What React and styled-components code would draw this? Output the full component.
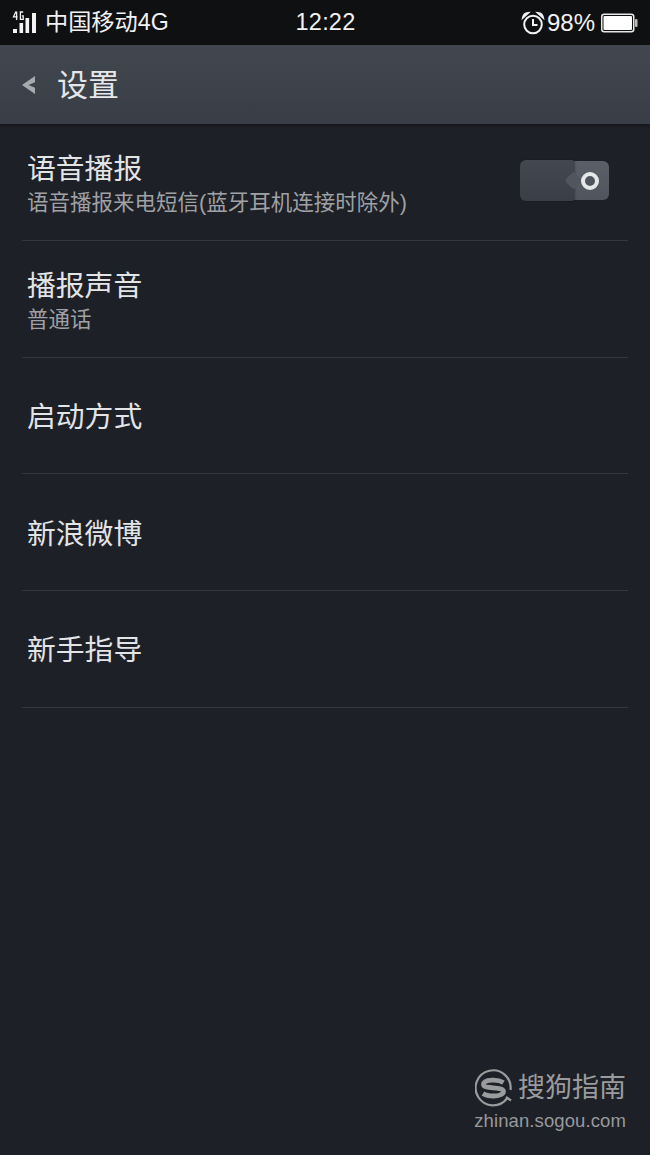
import React from "react";
import styled, { createGlobalStyle } from "styled-components";

const Global = createGlobalStyle`
  html, body { margin: 0; padding: 0; background: #1d2027; }
  body { font-family: "Liberation Sans", "Noto Sans CJK SC", sans-serif; }
`;

const Page = styled.div`
  position: relative;
  width: 650px;
  height: 1155px;
  overflow: hidden;
  background: #1d2027;
`;

const StatusBar = styled.div`
  height: 45px;
  background: #0f1011;
  color: #f2f2f2;
  display: grid;
  grid-template-columns: 1fr auto 1fr;
  align-items: center;
  padding: 0 12px;
  box-sizing: border-box;
`;

const StatusLeft = styled.div`
  display: flex;
  align-items: center;
  gap: 9px;
  font-size: 23.2px;
  line-height: 24px;
  padding-bottom: 3px;
`;

const SignalWrap = styled.span`
  display: flex;
  padding-top: 4px;
`;

const Carrier = styled.span`
  padding-top: 2px;
`;

const Clock = styled.div`
  font-size: 23.5px;
  letter-spacing: 0.2px;
  margin-left: 1px;
  padding-bottom: 1px;
`;

const StatusRight = styled.div`
  display: flex;
  align-items: center;
  justify-content: flex-end;
  gap: 2px;
  font-size: 24px;
`;

const Percent = styled.span`
  margin-right: 4px;
`;

const Header = styled.header`
  height: 79px;
  box-sizing: border-box;
  background: linear-gradient(#41474f, #383d46);
  box-shadow: 0 2px 2px rgba(20, 21, 25, 0.8);
  display: flex;
  align-items: center;
  padding: 1px 0 0 21px;
  gap: 21px;
`;

const HeaderTitle = styled.h1`
  margin: 0;
  padding-top: 2px;
  font-size: 31px;
  line-height: 40px;
  font-weight: 400;
  color: #e6e7e8;
`;

const List = styled.div`
  padding: 0 22px;
`;

const Row = styled.div`
  height: 116.75px;
  box-sizing: border-box;
  border-bottom: 1px solid #34373d;
  display: flex;
  align-items: center;
  justify-content: space-between;
  padding: 0 19px 0 5px;
`;

const RowText = styled.div`
  display: flex;
  flex-direction: column;
  padding-top: ${(props) => (props.$single ? "3px" : "6px")};
`;

const RowTitle = styled.div`
  font-size: 28.8px;
  line-height: 36px;
  color: #e3e4e5;
`;

const RowSub = styled.div`
  font-size: 21.5px;
  line-height: 31px;
  margin-top: 1px;
  color: #a0a1a4;
`;

const Switch = styled.div`
  display: flex;
  width: 89px;
  height: 41px;
  margin-bottom: 2px;
`;

const SwitchOff = styled.div`
  position: relative;
  width: 54px;
  background: linear-gradient(#43474f, #3a3e47);
  border-radius: 6px 2px 2px 6px;
  box-shadow: 1px 0 2px rgba(0, 0, 0, 0.3);
  z-index: 1;
`;

const SwitchOn = styled.div`
  position: relative;
  flex: 1;
  margin: 1px 0;
  background: linear-gradient(#5a5f68, #4f545d);
  border-radius: 0 6px 6px 0;
  display: flex;
  align-items: center;
  justify-content: center;
  padding-right: 4px;
  &::before {
    content: "";
    position: absolute;
    left: -7px;
    top: 13px;
    width: 13px;
    height: 13px;
    background: #50555e;
    transform: rotate(45deg);
    border-radius: 3px;
    z-index: 2;
  }
`;

const Ring = styled.div`
  width: 10px;
  height: 10px;
  border: 4px solid #e6e7e8;
  background: #50545c;
  border-radius: 50%;
  position: relative;
  z-index: 3;
`;

const Watermark = styled.div`
  position: absolute;
  right: 24px;
  top: 1067px;
  display: flex;
  flex-direction: column;
  align-items: flex-end;
  color: #98999c;
`;

const BrandRow = styled.div`
  display: flex;
  align-items: center;
  gap: 5px;
  font-size: 27px;
  line-height: 40px;
  color: #9a9b9d;
`;

const BrandName = styled.span`
  padding-top: 1px;
`;

const BrandUrl = styled.div`
  font-size: 18.5px;
  line-height: 22px;
  margin-top: 2px;
  letter-spacing: 0.1px;
`;

const Signal = () => (
  <svg width="24" height="24" viewBox="0 0 24 24">
    <g fill="#f4f4f4">
      <rect x="1" y="18" width="4" height="4" />
      <rect x="7.5" y="12" width="3.6" height="10" />
      <rect x="13.5" y="7" width="3.6" height="15" />
      <rect x="20" y="2" width="4" height="20" />
    </g>
    <g fill="none" stroke="#f4f4f4" strokeWidth="1.3">
      <path d="M4 0.5 1.5 5.8H5.6M4.6 0.5V9" />
      <path d="M11.2 1H8.4V8.3H11.2V4.8H9.8" />
    </g>
  </svg>
);

const Alarm = () => (
  <svg width="24" height="24" viewBox="0 0 24 24" fill="none" stroke="#f2f2f2">
    <circle cx="12" cy="13.5" r="8.8" strokeWidth="2" />
    <path d="M12 8v6h4.5" strokeWidth="2" />
    <path d="M2 6.5C2.5 3.8 4.5 2.2 7 2L2 6.5ZM22 6.5C21.5 3.8 19.5 2.2 17 2L22 6.5Z" strokeWidth="2" fill="#f2f2f2" />
  </svg>
);

const Battery = () => (
  <svg width="37" height="20" viewBox="0 0 37 20">
    <rect x="0.75" y="1.25" width="32" height="17.5" rx="2.5" fill="none" stroke="#e8e8e8" strokeWidth="1.5" />
    <rect x="2.5" y="3" width="28.5" height="14" rx="1" fill="#fff" />
    <rect x="34" y="6" width="2.5" height="8" rx="1" fill="#bbb" />
  </svg>
);

const Back = () => (
  <svg width="15" height="20" viewBox="0 0 15 20">
    <path d="M14 1 1 10l13 9v-6.2L7.5 10 14 7.2Z" fill="#a6abb0" />
  </svg>
);

const SogouLogo = () => (
  <svg width="38" height="40" viewBox="0 0 38 40" fill="none" stroke="#9a9b9d">
    <path d="M32 30.5A17.5 17.5 0 1 1 35.5 22" strokeWidth="2.2" />
    <path d="M36 32.5 31 29" strokeWidth="2.2" />
    <path d="M28.5 14.5C25 12.5 21 12 17 12.2 11 12.5 8.5 14 8.5 16.5 8.5 21.5 28.5 18 28.5 23.5 28.5 26.5 23.5 28 18.5 28 14.5 28 10.5 27.2 8 25.5" strokeWidth="4.8" />
  </svg>
);

const rows = [
  { title: "语音播报", sub: "语音播报来电短信(蓝牙耳机连接时除外)", toggle: true },
  { title: "播报声音", sub: "普通话" },
  { title: "启动方式" },
  { title: "新浪微博" },
  { title: "新手指导" },
];

export default function App() {
  return (
    <Page>
      <Global />
      <StatusBar>
        <StatusLeft>
          <SignalWrap>
            <Signal />
          </SignalWrap>
          <Carrier>中国移动4G</Carrier>
        </StatusLeft>
        <Clock>12:22</Clock>
        <StatusRight>
          <Alarm />
          <Percent>98%</Percent>
          <Battery />
        </StatusRight>
      </StatusBar>
      <Header>
        <Back />
        <HeaderTitle>设置</HeaderTitle>
      </Header>
      <List>
        {rows.map((row) => (
          <Row key={row.title}>
            <RowText $single={!row.sub}>
              <RowTitle>{row.title}</RowTitle>
              {row.sub && <RowSub>{row.sub}</RowSub>}
            </RowText>
            {row.toggle && (
              <Switch>
                <SwitchOff />
                <SwitchOn>
                  <Ring />
                </SwitchOn>
              </Switch>
            )}
          </Row>
        ))}
      </List>
      <Watermark>
        <BrandRow>
          <SogouLogo />
          <BrandName>搜狗指南</BrandName>
        </BrandRow>
        <BrandUrl>zhinan.sogou.com</BrandUrl>
      </Watermark>
    </Page>
  );
}
